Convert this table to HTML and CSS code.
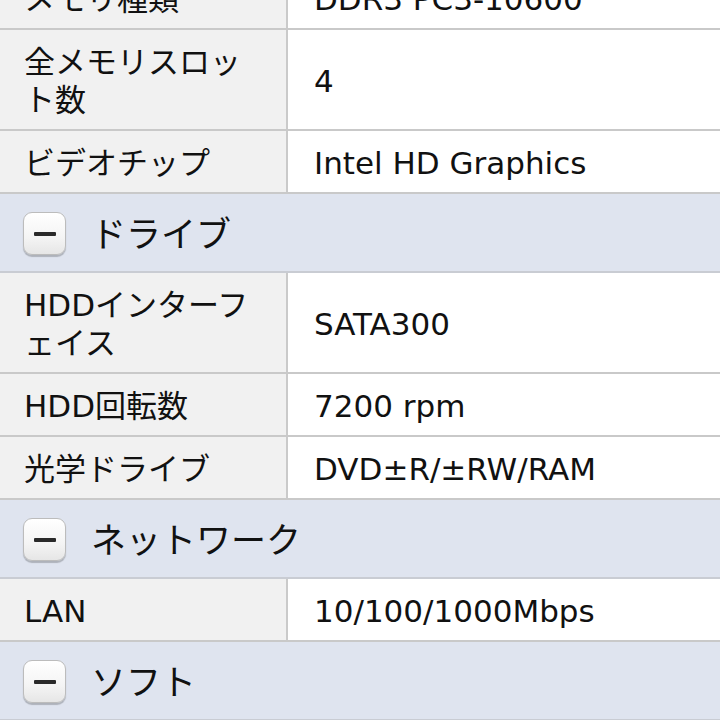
FILE: index.html
```html
<!DOCTYPE html>
<html lang="ja">
<head>
<meta charset="utf-8">
<title>スペック</title>
<link rel="stylesheet" href="styles.css">
</head>
<body>
<div class="spec">
  <div class="row"><div class="label">メモリ種類</div><div class="value">DDR3 PC3-10600</div></div>
  <div class="row"><div class="label">全メモリスロッ<br>ト数</div><div class="value">4</div></div>
  <div class="row"><div class="label">ビデオチップ</div><div class="value">Intel HD Graphics</div></div>
  <div class="section"><span class="toggle"><span class="bar"></span></span><span class="title">ドライブ</span></div>
  <div class="row"><div class="label">HDDインターフ<br>ェイス</div><div class="value">SATA300</div></div>
  <div class="row"><div class="label">HDD回転数</div><div class="value">7200 rpm</div></div>
  <div class="row"><div class="label">光学ドライブ</div><div class="value">DVD±R/±RW/RAM</div></div>
  <div class="section"><span class="toggle"><span class="bar"></span></span><span class="title">ネットワーク</span></div>
  <div class="row"><div class="label">LAN</div><div class="value">10/100/1000Mbps</div></div>
  <div class="section"><span class="toggle"><span class="bar"></span></span><span class="title">ソフト</span></div>
</div>
</body>
</html>
```
FILE: styles.css
```css
html, body {
  margin: 0;
  padding: 0;
  background: #ffffff;
  overflow: hidden;
}
body {
  font-family: "DejaVu Sans", "Noto Sans CJK JP", sans-serif;
  color: #111111;
  width: 720px;
  height: 720px;
}
.spec {
  margin-top: -33px;
  display: flex;
  flex-direction: column;
}
.row {
  display: grid;
  grid-template-columns: 288px 1fr;
  border-bottom: 2px solid #c9c9c9;
  font-size: 31px;
  line-height: 38px;
}
.label {
  background: #f1f1f1;
  border-right: 2px solid #cacaca;
  padding: 13px 6px 10px 24px;
  display: flex;
  align-items: center;
}
.value {
  background: #ffffff;
  padding: 13px 10px 10px 26px;
  display: flex;
  align-items: center;
}
.section {
  height: 77px;
  background: #dfe4ef;
  border-bottom: 2px solid #c9ccd3;
  display: flex;
  align-items: center;
  padding-left: 23px;
  font-size: 35px;
}
.toggle {
  width: 43px;
  height: 43px;
  box-sizing: border-box;
  border: 1px solid #bcbcbc;
  border-radius: 9px;
  background: linear-gradient(#ffffff, #f4f4f4 60%, #e6e6e6);
  box-shadow: 0 2px 1px rgba(0, 0, 0, 0.22);
  display: flex;
  align-items: center;
  justify-content: center;
  margin-right: 25px;
  margin-top: 2px;
}
.bar {
  width: 22px;
  height: 4px;
  background: #2a2a2a;
  border-radius: 1px;
}
.title {
  line-height: 40px;
  padding-top: 4px;
}
```
